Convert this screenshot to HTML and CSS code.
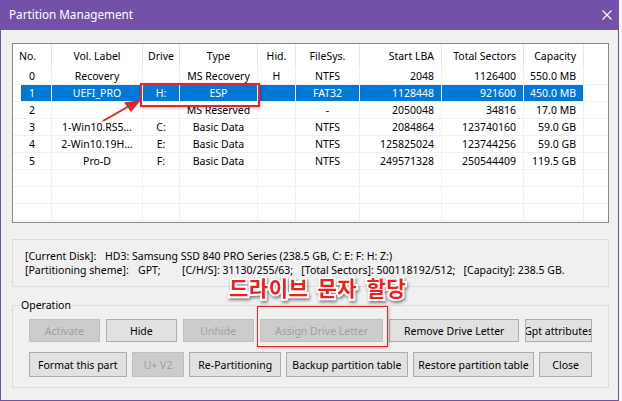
FILE: index.html
```html
<!DOCTYPE html>
<html>
<head>
<meta charset="utf-8">
<link rel="stylesheet" href="styles.css">
</head>
<body>
<div class="window">
  <div class="titlebar">
    <span class="title">Partition Management</span>
    <svg class="close" width="10" height="10" viewBox="0 0 10 10"><path d="M0.5 0.5 L9.5 9.5 M9.5 0.5 L0.5 9.5" stroke="#fff" stroke-width="1.1" fill="none"/></svg>
  </div>
  <div class="content">
    <div class="listbox">
      <div class="hdr">
        <div class="h l">No.</div><div class="h">Vol. Label</div><div class="h">Drive</div><div class="h">Type</div><div class="h">Hid.</div><div class="h">FileSys.</div><div class="h r">Start LBA</div><div class="h r">Total Sectors</div><div class="h r">Capacity</div><div class="h f"></div>
      </div>
      <div class="row"><div class="c no">0</div><div class="c">Recovery</div><div class="c"></div><div class="c">MS Recovery</div><div class="c">H</div><div class="c">NTFS</div><div class="c r">2048</div><div class="c r">1126400</div><div class="c r">550.0 MB</div><div class="c f"></div></div>
      <div class="row sel"><div class="c no">1</div><div class="c">UEFI_PRO</div><div class="c">H:</div><div class="c">ESP</div><div class="c"></div><div class="c">FAT32</div><div class="c r">1128448</div><div class="c r">921600</div><div class="c r">450.0 MB</div><div class="c f"></div></div>
      <div class="row"><div class="c no">2</div><div class="c"></div><div class="c"></div><div class="c">MS Reserved</div><div class="c"></div><div class="c">-</div><div class="c r">2050048</div><div class="c r">34816</div><div class="c r">17.0 MB</div><div class="c f"></div></div>
      <div class="row"><div class="c no">3</div><div class="c">1-Win10.RS5…</div><div class="c">C:</div><div class="c">Basic Data</div><div class="c"></div><div class="c">NTFS</div><div class="c r">2084864</div><div class="c r">123740160</div><div class="c r">59.0 GB</div><div class="c f"></div></div>
      <div class="row"><div class="c no">4</div><div class="c">2-Win10.19H…</div><div class="c">E:</div><div class="c">Basic Data</div><div class="c"></div><div class="c">NTFS</div><div class="c r">125825024</div><div class="c r">123744256</div><div class="c r">59.0 GB</div><div class="c f"></div></div>
      <div class="row"><div class="c no">5</div><div class="c">Pro-D</div><div class="c">F:</div><div class="c">Basic Data</div><div class="c"></div><div class="c">NTFS</div><div class="c r">249571328</div><div class="c r">250544409</div><div class="c r">119.5 GB</div><div class="c f"></div></div>
      <div class="row"><div class="c no"></div><div class="c"></div><div class="c"></div><div class="c"></div><div class="c"></div><div class="c"></div><div class="c r"></div><div class="c r"></div><div class="c r"></div><div class="c f"></div></div>
      <div class="row"><div class="c no"></div><div class="c"></div><div class="c"></div><div class="c"></div><div class="c"></div><div class="c"></div><div class="c r"></div><div class="c r"></div><div class="c r"></div><div class="c f"></div></div>
      <div class="row"><div class="c no"></div><div class="c"></div><div class="c"></div><div class="c"></div><div class="c"></div><div class="c"></div><div class="c r"></div><div class="c r"></div><div class="c r"></div><div class="c f"></div></div>
    </div>

    <div class="info">
      <div class="line"><span class="k1">[Current Disk]:</span>HD3: Samsung SSD 840 PRO Series (238.5 GB, C: E: F: H: Z:)</div>
      <div class="line"><span class="k2">[Partitioning sheme]:</span><span class="k3">GPT;</span>[C/H/S]: 31130/255/63;   [Total Sectors]: 500118192/512;   [Capacity]: 238.5 GB.</div>
    </div>

    <fieldset class="ops">
      <legend>Operation</legend>
      <div class="brow r1">
        <div class="btn dis w-act">Activate</div>
        <div class="btn w-hide">Hide</div>
        <div class="btn dis w-unhide">Unhide</div>
        <div class="btn dis w-assign">Assign Drive Letter</div>
        <div class="btn w-remove">Remove Drive Letter</div>
        <div class="btn w-gpt">Gpt attributes</div>
      </div>
      <div class="brow r2">
        <div class="btn w-format">Format this part</div>
        <div class="btn dis w-uv">U+ V2</div>
        <div class="btn w-repart">Re-Partitioning</div>
        <div class="btn w-backup">Backup partition table</div>
        <div class="btn w-restore">Restore partition table</div>
        <div class="btn w-close">Close</div>
      </div>
    </fieldset>
  </div>

  <div class="mark mark-esp"></div>
  <div class="mark mark-assign"></div>
  <svg class="arrow" width="619" height="401" viewBox="0 0 619 401">
    <line x1="103" y1="121" x2="131" y2="105" stroke="#e3262a" stroke-width="2"/>
    <polygon points="141,100 124,102.5 131,112" fill="#e3262a"/>
  </svg>
  <div class="callout">드라이브 문자 할당</div>
</div>
</body>
</html>
```

FILE: styles.css
```css
* { box-sizing: border-box; }
body {
  margin: 0;
  background: #f6f6f6;
  font-family: "Noto Sans", "Liberation Sans", sans-serif;
  font-size: 10.5px;
  color: #000;
}
.window {
  position: relative;
  width: 619px;
  height: 401px;
  background: #f0f0f0;
  border: 1px solid #7451a8;
  border-top: 0;
}
.titlebar {
  height: 30px;
  background: #7451a8;
  display: flex;
  align-items: center;
  padding: 0 6px 2px 8px;
  color: #fff;
}
.title { flex: 1; font-size: 11.7px; }
.close { display: block; margin-top: 1px; }

.content { padding: 13px 9px 0 11px; }

.listbox {
  height: 180px;
  border: 1px solid #828790;
  background: #fff;
  overflow: hidden;
}
.hdr, .row {
  display: grid;
  grid-template-columns: 39px 91px 37px 78px 38px 64px 82px 82px 60px 1fr;
}
.hdr { height: 24px; }
.h {
  line-height: 24px;
  border-right: 1px solid #e5e5e5;
  text-align: center;
  white-space: nowrap;
  overflow: hidden;
}
.h.l { text-align: left; padding-left: 6px; }
.h.r { text-align: right; padding-right: 7px; }
.h.f { border-right: 0; }

.row { height: 17px; }
.c {
  line-height: 17px;
  height: 17px;
  border-right: 1px solid #f0f0f0;
  border-bottom: 1px solid #f0f0f0;
  text-align: center;
  white-space: nowrap;
  overflow: hidden;
}
.c.no { text-align: left; padding-left: 16px; }
.c.r { text-align: right; padding-right: 7px; }
.c.f { border-right: 0; }
.row.sel .c { background: #0078d7; color: #fff; }
.row.sel .c.no { background: linear-gradient(90deg, #fff 8px, #0078d7 8px); }
.row.sel .c.f { background: #fff; }

.info {
  margin-top: 16px;
  height: 48px;
  border: 1px solid #dcdcdc;
  padding: 9px 0 0 12px;
  line-height: 14px;
}
.line { white-space: pre; }
.k1 { display: inline-block; width: 80px; }
.k2 { display: inline-block; width: 113px; }
.k3 { display: inline-block; width: 44px; }

.ops {
  margin: 10px 0 0 0;
  min-width: 0;
  border: 1px solid #dcdcdc;
  padding: 6px 16px 10px 16px;
}
.ops legend {
  margin-left: -9px;
  padding: 0 1px;
  line-height: 16px;
  font-size: 10.5px;
}
.brow { display: flex; }
.r1 { gap: 6px; height: 23px; }
.r2 { gap: 5px; height: 25px; margin-top: 10px; }
.btn {
  display: flex;
  align-items: center;
  justify-content: center;
  height: 100%;
  border: 1px solid #adadad;
  background: #e1e1e1;
  white-space: nowrap;
  overflow: hidden;
}
.btn.dis {
  background: #cccccc;
  border-color: #bfbfbf;
  color: #a0a0a0;
}
.w-act { width: 71px; }
.w-hide { width: 71px; }
.w-unhide { width: 71px; }
.w-assign { width: 124px; }
.w-remove { width: 130px; }
.w-gpt { width: 67px; }
.w-format { width: 98px; }
.w-uv { width: 53px; }
.w-repart { width: 92px; }
.w-backup { width: 122px; }
.w-restore { width: 122px; }
.w-close { width: 53px; }

.mark {
  position: absolute;
  border: 2px solid #e3262a;
  box-shadow: 1px 1px 3px rgba(0,0,0,0.25);
}
.mark-esp { left: 139px; top: 83px; width: 120px; height: 24px; }
.mark-assign { left: 256px; top: 306px; width: 131px; height: 41px; border-width: 1px; }
.arrow { position: absolute; left: -1px; top: 0; pointer-events: none; }
.callout {
  position: absolute;
  left: 228px;
  top: 277px;
  font-family: "Noto Sans CJK KR", sans-serif;
  font-weight: 700;
  font-size: 21px;
  line-height: 21px;
  color: #f21d1d;
  -webkit-text-stroke: 4px #fff;
  paint-order: stroke fill;
  letter-spacing: 0.5px;
  word-spacing: 4px;
  filter: drop-shadow(1px 2px 1.5px rgba(0,0,0,0.45));
  white-space: nowrap;
}
```
